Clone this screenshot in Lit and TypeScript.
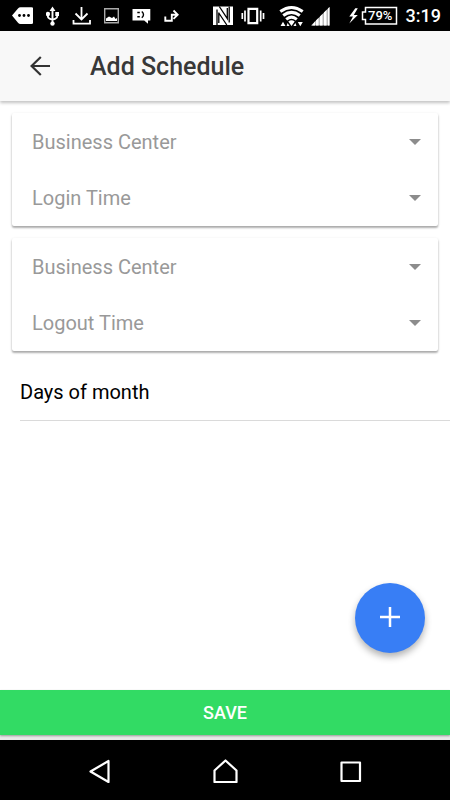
import { LitElement, html, css, svg, TemplateResult } from "lit";
import { customElement } from "lit/decorators.js";

interface Glyph {
  x: number;
  width: number;
  body: TemplateResult;
}

// Status glyphs share one coordinate space; x and width select the slice each one shows.
const notifications: Glyph[] = [
  { x: 12, width: 21, body: svg`<path fill="#fff" d="M12 15.500 18 8.500Q19 7.200 20.500 7.200H31.500Q33.300 7.200 33.300 9V22.200Q33.300 24 31.500 24H20.500Q19 24 18 22.700Z"/><g fill="#000"><circle cx="19.500" cy="15.500" r="1.400"/><circle cx="24" cy="15.500" r="1.400"/><circle cx="28.500" cy="15.500" r="1.400"/></g>` },
  { x: 46, width: 13, body: svg`<path fill="none" stroke="#fff" stroke-width="1.900" d="M52.500 10V24M47.800 13.500V16Q47.800 18 49.500 18.600L52.500 19.800 55.500 18.600Q57.300 18 57.300 16V13.500"/><g fill="#fff"><path d="m52.500 6.500 3 4.500h-6zM55.300 12h4v4h-4z"/><circle cx="47.900" cy="14" r="2.200"/><circle cx="52.500" cy="23.600" r="2.200"/></g>` },
  { x: 73, width: 19, body: svg`<path fill="none" stroke="#fff" stroke-width="1.800" d="M82.500 7V19M76.500 13.500l6 6 6-6M74.500 20V23.700H91V20"/>` },
  { x: 105, width: 15, body: svg`<path fill="none" stroke="#aaa" stroke-width="1.400" d="M105.700 8.700h13.600v14h-13.600z"/><path fill="#fff" d="M107 21v-2.500l3-2 3 1.500 2-1.500 1.500 2.500 1.500-1v3z"/>` },
  { x: 133, width: 19, body: svg`<path fill="#fff" d="M133.500 9h17.800v11.500h-2.300v3.200l-3.800-3.200h-11.700z"/><path fill="none" stroke="#000" stroke-width="1.400" d="M138.300 12.500h2.500M138.300 16.800h2.500M142.800 11.500Q146.200 14.600 142.800 17.800"/>` },
  { x: 165, width: 15, body: svg`<path fill="none" stroke="#fff" stroke-width="1.900" d="M166.300 16.500v4.200h6.500v-6H179M174.500 10.500l4.200 4.200-4.200 4.200"/>` },
];

const signals: Glyph[] = [
  { x: 210, width: 24, body: svg`<path fill="#fff" d="M213 6.500H233V25H213z"/><path fill="none" stroke="#000" stroke-width="1.300" d="M217 25V9.500M219.300 6.500 227.300 18.500V8M229.200 6.500V22.500M218.800 12.500V23M218.800 13 226.800 25"/>` },
  { x: 238, width: 36, body: svg`<path fill="none" stroke="#fff" stroke-width="2.200" d="M248.500 8.800h8.700v14.400h-8.700z"/><path fill="none" stroke="#fff" stroke-width="1.700" d="M245 10.500v11M260.700 10.500v11M242.300 13v6M263.500 13v6"/>` },
  { x: 278, width: 26, body: svg`<g fill="none" stroke="#fff" stroke-width="3"><path d="M280.300 11.500Q291.500 3.500 302.700 11.500M283.200 15.500Q291.500 9.200 299.800 15.500M286.200 19.300Q291.500 15 296.800 19.300"/></g><path fill="#fff" d="M288.300 21.500q3.200-2.300 6.400 0l-3.200 4.500zM280.500 26l2.500-4.200 2.500 4.200zM297.800 22h5l-2.500 4.200zM286.600 26l1-3 2 3zM296.400 26l-1-3-2 3z"/>` },
  { x: 308, width: 36, body: svg`<path fill="#bbb" d="M311 25.500 329.500 7V25.500z"/><path fill="#fff" d="M315 21.500v4h-3zM316 20.500l2.500-2.500v7.500h-2.500zM320 16.500l2.500-2.500v11.500h-2.500zM324 12.500l2.500-2.500v15.500h-2.500zM328 8.500l1.500-1.500v18.500h-1.500z"/>` },
  { x: 348, width: 54, body: svg`<path fill="#fff" d="m355.300 8.200-6 8.300h3.700l-3.700 7 8.500-8.600h-4l4-6.700z"/><path fill="none" stroke="#fff" stroke-width="1.500" d="M365.500 7.500h31v16.500h-31v-4.500h-3v-7.500h3z"/><text class="charge" x="368" y="20">79%</text>` },
];

const drawGlyph = (g: Glyph) =>
  html`<svg width=${g.width} height="31" viewBox="${g.x} 0 ${g.width} 31" aria-hidden="true">${g.body}</svg>`;

@customElement("app-root")
export class AppRoot extends LitElement {
  static styles = css`
    :host {
      display: flex;
      flex-direction: column;
      min-height: 100vh;
      background: #fff;
      color: #000;
      font-family: Roboto, "Noto Sans", sans-serif;
      font-size: 20px;
    }
    svg { display: block; flex: none; }
    button { border: 0; padding: 0; font: inherit; cursor: pointer; }
    .status {
      display: flex;
      justify-content: space-between;
      height: 31px;
      padding: 0 9px 0 12px;
      background: #000;
      color: #fff;
    }
    .tray { display: flex; gap: 13px; }
    .signals { display: flex; align-items: center; gap: 4px; }
    .charge { fill: #fff; font-size: 13px; font-weight: 500; }
    .clock { font-size: 18px; font-weight: 500; line-height: 32px; }
    .toolbar {
      display: flex;
      align-items: center;
      gap: 30px;
      height: 70px;
      padding: 0 20px;
      background: #f8f8f8;
      box-shadow: 0 2px 3px rgba(0, 0, 0, 0.24);
    }
    .back {
      display: grid;
      place-items: center;
      width: 40px;
      height: 40px;
      background: none;
    }
    h1 { margin: 0; font-size: 25px; font-weight: 500; color: #383838; }
    main { flex: 1; display: flex; flex-direction: column; }
    .cards { display: grid; gap: 12px; padding: 12px 12px 0; }
    .card {
      padding: 1px 0 0;
      border-radius: 2px;
      background: #fff;
      box-shadow: 0 2px 2px rgba(0, 0, 0, 0.26), 0 1px 3px rgba(0, 0, 0, 0.14);
    }
    .field {
      position: relative;
      display: flex;
      align-items: center;
      height: 56px;
      padding-left: 20px;
      color: #999;
    }
    select {
      flex: 1;
      align-self: stretch;
      min-width: 0;
      border: 0;
      appearance: none;
      background: transparent;
      color: inherit;
      font: inherit;
    }
    .caret { position: absolute; right: 17px; pointer-events: none; }
    .days {
      margin: 13px 0 0 20px;
      border-bottom: 1px solid #dadada;
      font-size: 20px;
      font-weight: 400;
      line-height: 56px;
    }
    .fab-row {
      display: flex;
      justify-content: flex-end;
      margin-top: auto;
      padding: 24px 25px 37px;
    }
    .fab {
      display: grid;
      place-items: center;
      width: 70px;
      height: 70px;
      padding-bottom: 2px;
      border-radius: 50%;
      background: #387ef5;
      box-shadow: 0 4px 7px rgba(0, 0, 0, 0.3);
    }
    .footer { height: 50px; background: #e8e8e8; }
    .save {
      display: block;
      width: 100%;
      height: 45px;
      background: #32db64;
      box-shadow: 0 1px 2px rgba(0, 0, 0, 0.35);
      color: #fff;
      font-size: 18px;
      font-weight: 500;
    }
    .system {
      display: flex;
      justify-content: center;
      gap: 85px;
      height: 60px;
      background: #000;
    }
    .system button {
      display: grid;
      place-items: center;
      width: 40px;
      background: none;
    }
  `;

  private field(id: string, name: string) {
    return html`
      <div class="field">
        <label for=${id}>${name}</label>
        <select id=${id}><option value=""></option></select>
        <svg class="caret" width="12" height="6" viewBox="0 0 12 6" aria-hidden="true"><path fill="#8c8c8c" d="M0 0H12L6 6z"/></svg>
      </div>
    `;
  }

  render() {
    return html`
      <div class="status">
        <div class="tray">${notifications.map(drawGlyph)}</div>
        <div class="signals">${signals.map(drawGlyph)}<span class="clock">3:19</span></div>
      </div>
      <header class="toolbar">
        <button class="back" aria-label="Back">
          <svg width="20" height="20" viewBox="0 0 20 20"><path fill="none" stroke="#333" stroke-width="2.200" d="M20 10H2M10.800 1 1.600 10 10.800 19"/></svg>
        </button>
        <h1>Add Schedule</h1>
      </header>
      <main>
        <div class="cards">
          <div class="card">${this.field("login-center", "Business Center")}${this.field("login-time", "Login Time")}</div>
          <div class="card">${this.field("logout-center", "Business Center")}${this.field("logout-time", "Logout Time")}</div>
        </div>
        <h2 class="days">Days of month</h2>
        <div class="fab-row">
          <button class="fab" aria-label="Add">
            <svg width="20" height="20" viewBox="0 0 20 20"><path stroke="#fff" stroke-width="2.500" d="M10 0V20M0 10H20"/></svg>
          </button>
        </div>
      </main>
      <footer class="footer"><button class="save">SAVE</button></footer>
      <nav class="system">
        <button aria-label="Go back"><svg width="26" height="26" viewBox="0 0 26 26"><path fill="none" stroke="#fff" stroke-width="2.200" stroke-linejoin="round" d="M21.500 4V25L3.500 14.500z"/></svg></button>
        <button aria-label="Home"><svg width="26" height="26" viewBox="0 0 26 26"><path fill="none" stroke="#fff" stroke-width="2.200" stroke-linejoin="round" d="M13.500 3.500 24.500 13.500V25H2.500V13.500z"/></svg></button>
        <button aria-label="Recent apps"><svg width="26" height="26" viewBox="0 0 26 26"><path fill="none" stroke="#fff" stroke-width="2.200" stroke-linejoin="round" d="M4.500 5.500H23V24H4.500z"/></svg></button>
      </nav>
    `;
  }
}
